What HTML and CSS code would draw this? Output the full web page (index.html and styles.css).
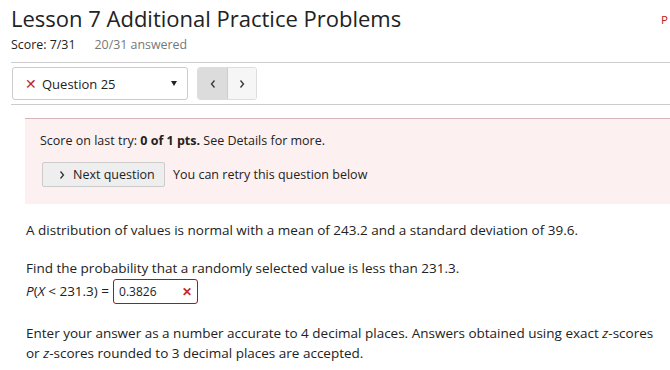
FILE: index.html
```html
<!DOCTYPE html>
<html>
<head>
<meta charset="utf-8">
<link rel="stylesheet" href="styles.css">
</head>
<body>
<div class="page">
  <header class="top">
    <div class="titlebox">
      <h1 class="title">Lesson 7 Additional Practice Problems</h1>
      <div class="scoreline"><span class="score">Score: 7/31</span><span class="answered">20/31 answered</span></div>
    </div>
    <span class="corner">P</span>
  </header>
  <div class="navbar">
    <div class="select">
      <span class="xmark">✕</span>
      <span class="qlabel">Question 25</span>
      <span class="caret"></span>
    </div>
    <div class="pager">
      <span class="pbtn prev"><svg width="8" height="10" viewBox="0 0 8 10"><path d="M5.5 1.5 L2.5 5 L5.5 8.5" fill="none" stroke="#333" stroke-width="1.3"/></svg></span>
      <span class="pbtn next"><svg width="8" height="10" viewBox="0 0 8 10"><path d="M2.5 1.5 L5.5 5 L2.5 8.5" fill="none" stroke="#333" stroke-width="1.3"/></svg></span>
    </div>
  </div>
  <section class="alert">
    <p class="lasttry">Score on last try: <b>0 of 1 pts.</b> See Details for more.</p>
    <div class="retryrow">
      <button class="nextq"><svg width="8" height="10" viewBox="0 0 8 10"><path d="M2.5 1.5 L5.5 5 L2.5 8.5" fill="none" stroke="#333" stroke-width="1.3"/></svg>Next question</button>
      <span class="retry">You can retry this question below</span>
    </div>
  </section>
  <section class="question">
    <p class="p1">A distribution of values is normal with a mean of 243.2 and a standard deviation of 39.6.</p>
    <p class="p2">Find the probability that a randomly selected value is less than 231.3.</p>
    <div class="eqrow">
      <span class="expr"><i>P</i>(<i>X</i> &lt; 231.3) =</span>
      <span class="answer"><span class="val">0.3826</span><span class="bad">✕</span></span>
    </div>
    <p class="p3">Enter your answer as a number accurate to 4 decimal places. Answers obtained using exact <i>z</i>-scores or <i>z</i>-scores rounded to 3 decimal places are accepted.</p>
  </section>
</div>
</body>
</html>
```
FILE: styles.css
```css
* { box-sizing: border-box; }
html, body { margin: 0; padding: 0; background: #fff; }
body {
  font-family: "Open Sans", "Noto Sans", sans-serif;
  color: #222;
  font-size: 13.5px;
  overflow: hidden;
}
.page { width: 670px; padding-left: 11px; }
.top { display: flex; justify-content: space-between; }
.title {
  margin: 0;
  padding-top: 3px;
  font-size: 22px;
  font-weight: 400;
  line-height: 30px;
  color: #222;
}
.scoreline { font-size: 12.4px; line-height: 16px; margin-top: 4px; }
.score { color: #222; }
.answered { color: #777; margin-left: 19px; }
.corner { color: #b22; font-size: 11.5px; padding-top: 12px; padding-right: 2px; }
.navbar {
  margin-top: 9px;
  border-top: 1px solid #ccc;
  border-bottom: 1px solid #ccc;
  padding: 4px 0 4px 1px;
  display: flex;
  gap: 9px;
  height: 43px;
}
.select {
  width: 176px;
  height: 33px;
  border: 1px solid #ccc;
  border-radius: 3px;
  display: flex;
  align-items: center;
  padding-left: 12px;
  font-size: 13px;
}
.xmark { color: #c0272d; font-size: 14px; margin-right: 5px; font-weight: 300; }
.qlabel { flex: 1; color: #222; }
.caret {
  width: 0; height: 0;
  border-left: 3.5px solid transparent;
  border-right: 3.5px solid transparent;
  border-top: 5px solid #222;
  margin-right: 10px;
}
.pager {
  display: flex;
  height: 33px;
  border: 1px solid #ddd;
  border-radius: 3px;
  overflow: hidden;
}
.pbtn { width: 30px; display: flex; align-items: center; justify-content: center; }
.prev { background: #dcdcdc; border-right: 1px solid #ccc; }
.next { background: #f6f6f6; width: 28px; }
.alert {
  margin: 13px 0 0 14px;
  background: #fdf0f0;
  border-top: 1px solid #d4b4ba;
  padding: 13px 0 17px 15px;
  font-size: 12.5px;
}
.lasttry { margin: 0; line-height: 18px; color: #222; }
.retryrow { display: flex; align-items: center; margin-top: 12px; gap: 8px; }
.nextq {
  font: inherit;
  font-size: 12.5px;
  height: 25px;
  width: 123px;
  margin-left: 2px;
  background: #eee;
  border: 1px solid #ccc;
  border-radius: 2px;
  color: #222;
  display: flex;
  align-items: center;
  padding: 0 0 0 15px;
  gap: 7px;
}
.retry { color: #222; }
.question { padding-left: 15px; }
.question p { margin: 0; line-height: 19px; }
.p1 { margin-top: 17px !important; }
.p2 { margin-top: 19px !important; }
.eqrow { display: flex; align-items: center; gap: 4px; height: 26px; margin-top: 0; }
.expr { color: #222; }
.answer {
  display: inline-flex;
  align-items: center;
  justify-content: space-between;
  width: 85px;
  height: 25px;
  border: 1px solid #a31a1a;
  border-radius: 3px;
  padding: 0 5px 0 5px;
  font-size: 12px;
}
.bad { color: #c0272d; font-size: 12px; font-weight: 700; }
.question p.p3 { margin-top: 19px; line-height: 20px; }
```
